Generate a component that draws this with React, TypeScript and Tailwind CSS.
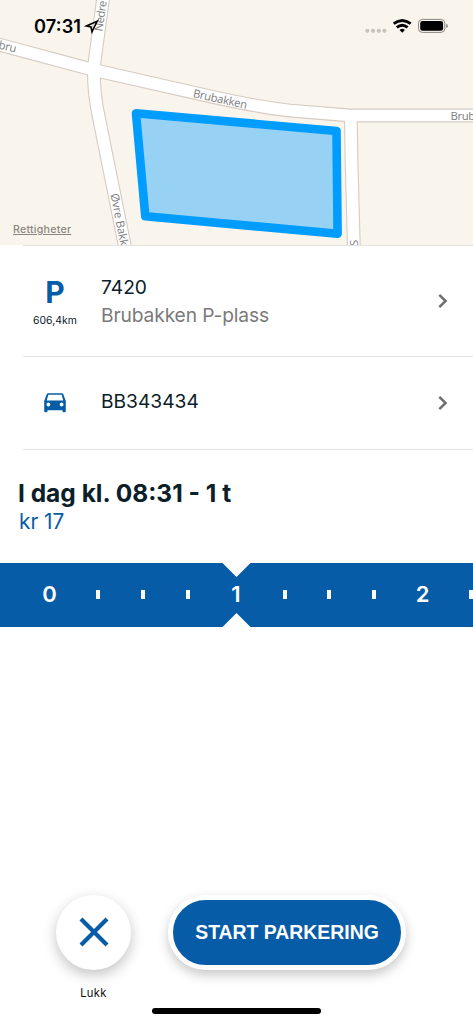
import { ReactNode } from "react";

const ticks = ["0", "1", "2"];

const roads = [
  "M-8 42.7 L94 70 L215 97.4 Q262 107.5 290 110.6 L350 115.5 H480",
  "M104 -8 L94 66 Q93 90 99 118 L126 252",
  "M350.8 115 L351.5 160 L354 252",
];

function StatusBar() {
  return (
    <svg className="absolute inset-x-0 top-0" width="473" height="50" viewBox="0 0 473 50">
      <text x="34" y="32.5" fontSize="18.2" fontWeight="600" textLength="47" className="font-[Inter,sans-serif]">07:31</text>
      <path d="M97.2 21.2 L86.3 25.9 L91 27 L92 31.8 Z" fill="none" stroke="#000" strokeWidth="1.6" strokeLinejoin="miter" />
      <g fill="#c8c4bc">
        <circle cx="367.3" cy="30.8" r="2.1" />
        <circle cx="373" cy="30.8" r="2.1" />
        <circle cx="378.8" cy="30.8" r="2.1" />
        <circle cx="384.4" cy="30.8" r="2.1" />
      </g>
      <g fill="none" stroke="#000" strokeWidth="2.8">
        <path d="M393.7 23.7 Q402.2 17.2 410.7 23.7" />
        <path d="M396.8 27.4 Q402.2 23 407.6 27.4" />
      </g>
      <path d="M399.5 29.9 Q402.2 27.7 404.9 29.9 L402.2 32.8 Z" />
      <rect x="418.5" y="19.4" width="26.3" height="13" rx="3.8" fill="none" stroke="#8b8882" />
      <rect x="420.2" y="21.1" width="22.9" height="9.6" rx="2.3" />
      <path d="M446.2 23.8 Q448 24.6 448 25.9 Q448 27.2 446.2 28 Z" fill="#8b8882" />
    </svg>
  );
}

function ParkingMap() {
  return (
    <div className="relative h-[245px] overflow-hidden bg-[#f9f4ec]">
      <svg width="473" height="245" viewBox="0 0 473 245" className="block">
        <g fill="none" stroke="#d6ccc2" strokeWidth="13.8">
          {roads.map((d) => <path key={d} d={d} />)}
        </g>
        <g fill="none" stroke="#fff" strokeWidth="11.6">
          {roads.map((d) => <path key={d} d={d} />)}
        </g>
        <path d="M136 113.3 L336.5 131 L337.6 233.7 L145.3 216.3 Z" fill="#97d1f4" stroke="#009dff" strokeWidth="8.6" strokeLinejoin="round" />
        <g fill="#7d7d7d" fontSize="11.3" className="font-[Open_Sans,sans-serif]">
          <text transform="translate(-2 48.5) rotate(13)" textLength="18">bru</text>
          <text transform="translate(192.5 97) rotate(12.5)" textLength="55">Brubakken</text>
          <text x="450.5" y="119.5" textLength="54">Brubakken</text>
          <text transform="translate(102.3 31.8) rotate(-82)" textLength="31">Nedre</text>
          <text transform="translate(110.5 194.3) rotate(79)" textLength="59">Øvre Bakke</text>
          <text transform="translate(357.5 246) rotate(-90)">S</text>
        </g>
      </svg>
      <StatusBar />
      <a className="absolute left-[13px] top-[223px] font-[Inter,sans-serif] text-[10.6px] leading-[14px] font-medium tracking-[0.25px] text-[#8a8782] underline">
        Rettigheter
      </a>
    </div>
  );
}

function Chevron() {
  return (
    <svg width="10" height="16" viewBox="0 0 10 16" fill="none" stroke="#6f6f6f" strokeWidth="2.5">
      <path d="M1.3 1.8 L7.6 8 L1.3 14.2" />
    </svg>
  );
}

function Row({ icon, height, children }: { icon: ReactNode; height: string; children: ReactNode }) {
  return (
    <div className={`ml-[23px] flex items-center border-t border-[#e4e4e4] ${height}`}>
      <div className="flex w-16 flex-col items-center">{icon}</div>
      <div className="ml-[14px] flex-1 text-[19.2px] leading-7">{children}</div>
      <div className="mr-[25px]">
        <Chevron />
      </div>
    </div>
  );
}

function Minutes() {
  return (
    <div className="flex w-[137.5px] shrink-0 justify-between pr-[22px] pl-[22px]">
      <i className="h-[9px] w-1 bg-white" />
      <i className="h-[9px] w-1 bg-white" />
      <i className="h-[9px] w-1 bg-white" />
    </div>
  );
}

export default function App() {
  return (
    <main className="flex h-[1024px] w-[473px] flex-col overflow-hidden bg-white font-[Inter,sans-serif] text-[#0b2029]">
      <ParkingMap />

      {/* place and car */}
      <Row
        height="h-[111px]"
        icon={
          <>
            <span className="pt-0.5 text-[30px] leading-8 font-bold text-[#075ca8]">P</span>
            <span className="mt-[5px] text-[10.4px] leading-4 tracking-[0.05px]">606,4km</span>
          </>
        }
      >
        <div>7420</div>
        <div className="tracking-[-0.12px] text-[#7a7a7a]">Brubakken P-plass</div>
      </Row>
      <Row
        height="h-[93px]"
        icon={
          <svg width="22" height="20" viewBox="0 0 22 20" className="block">
            <path
              fill="#075ca8"
              fillRule="evenodd"
              d="M4.3 0.2 H17.7 Q19 0.2 19.4 1.5 L21.8 8 V18.2 Q21.8 19.3 20.6 19.3 H19.6 Q18.5 19.3 18.5 18.2 V17.2 H3.5 V18.2 Q3.5 19.3 2.4 19.3 H1.4 Q0.2 19.3 0.2 18.2 V8 L2.6 1.5 Q3 0.2 4.3 0.2 Z M4.4 1.7 L2.7 7.4 H19.3 L17.6 1.7 Z M4.4 9.6 A1.9 1.9 0 1 0 4.4 13.4 A1.9 1.9 0 1 0 4.4 9.6 Z M17.6 9.6 A1.9 1.9 0 1 0 17.6 13.4 A1.9 1.9 0 1 0 17.6 9.6 Z"
            />
          </svg>
        }
      >
        <div className="pb-1">BB343434</div>
      </Row>

      {/* duration */}
      <div className="ml-[23px] border-t border-[#e4e4e4]" />
      <div className="h-[112px] pt-7 pl-[18px]">
        <div className="text-[24.5px] leading-[30px] font-bold">I dag kl. 08:31 - 1 t</div>
        <div className="pt-px pl-px text-[20.8px] leading-[26px] text-[#075ca8]">kr 17</div>
      </div>

      <div className="relative mt-[0.6px] flex h-16 items-center bg-[#075ca8] pl-[25px]">
        {ticks.map((t) => (
          <div key={t} className="flex shrink-0 items-center pb-px">
            <span className="w-[49px] text-center text-[22px] leading-6 font-semibold text-white">{t}</span>
            <Minutes />
          </div>
        ))}
        <svg className="absolute top-0 left-[222px]" width="29" height="64" viewBox="0 0 29 64" fill="#fff">
          <path d="M0.5 0 H28.5 L14.5 14 Z M0.5 64 H28.5 L14.5 50 Z" />
        </svg>
      </div>

      {/* actions */}
      <div className="mt-[268.4px] flex items-start pl-14">
        <div className="flex w-[75px] flex-col items-center">
          <button className="flex h-[75px] w-[75px] items-center justify-center rounded-full bg-white shadow-[0_5px_14px_rgba(0,0,0,0.24)]">
            <svg width="30" height="30" viewBox="0 0 30 30" stroke="#075ca8" strokeWidth="4.2">
              <path d="M2 2 L28 28 M28 2 L2 28" />
            </svg>
          </button>
          <span className="mt-[15px] text-[11.2px] leading-4 tracking-[0.35px] text-[#111]">Lukk</span>
        </div>
        <button className="ml-[37px] h-[75px] w-[238px] rounded-full border-5 border-white bg-[#075ca8] font-['Liberation_Sans',sans-serif] text-[19.4px] font-bold text-white shadow-[0_5px_12px_rgba(0,0,0,0.22)]">
          START PARKERING
        </button>
      </div>
      <div className="mt-[7px] ml-[152px] h-[6px] w-[169px] rounded-full bg-black" />
    </main>
  );
}
